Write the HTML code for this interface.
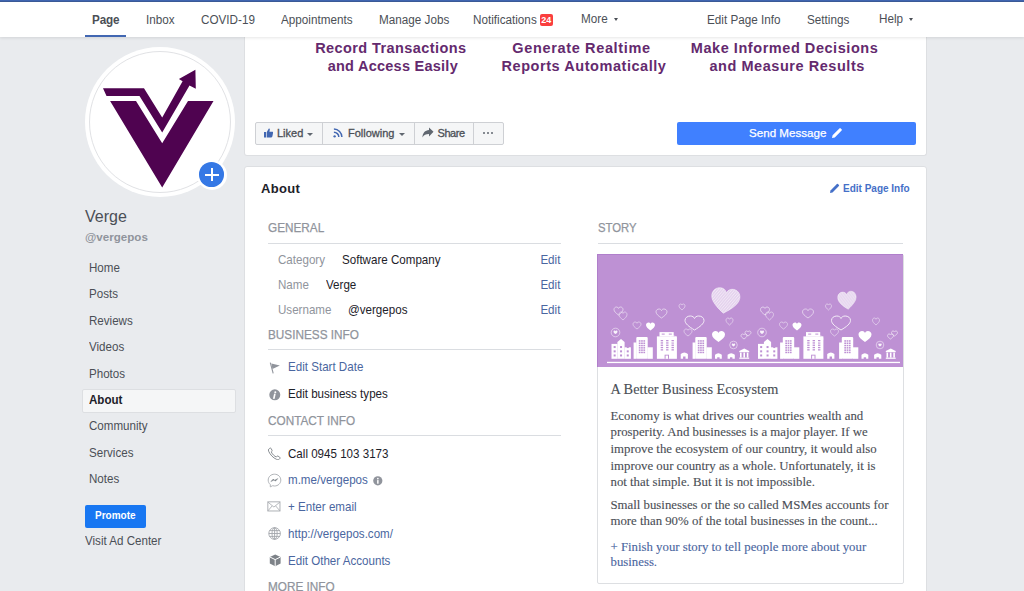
<!DOCTYPE html>
<html><head><meta charset="utf-8">
<style>
*{margin:0;padding:0;box-sizing:border-box}
html,body{width:1024px;height:591px;overflow:hidden;background:#e9ebee;font-family:"Liberation Sans",sans-serif;color:#1d2129}
.a{position:absolute;white-space:nowrap;line-height:1}
#topline{position:absolute;z-index:7;left:0;top:0;width:1024px;height:2px;background:linear-gradient(#4065b0 0,#4065b0 1px,#3b5a96 1px,#3b5a96 2px)}
#nav{z-index:5;position:absolute;left:0;top:2px;width:1024px;height:35px;background:#fff;box-shadow:0 1px 3px rgba(0,0,0,.10)}
.nv{font-size:12.5px;color:#4b4f56;z-index:6;transform:scaleX(.936);transform-origin:0 0}
.card{position:absolute;background:#fff;border:1px solid #dddfe2;border-radius:3px}
.sb{font-size:12.4px;color:#4b4f56;transform:scaleX(.935);transform-origin:0 0}
.hd{font-size:13px;color:#90949c;transform:scaleX(.905);transform-origin:0 0;-webkit-text-stroke:.25px #90949c}
.sep{position:absolute;height:1px;background:#dadde1}
.lk{color:#4a66a0}
.r{transform-origin:100% 0 !important}
.gy{color:#90949c}
.tx{font-size:12.4px;transform:scaleX(.935);transform-origin:0 0}
.srf{font-family:"Liberation Serif",serif;color:#4b4f56;-webkit-text-stroke:.12px currentColor}
.cv{font-size:14.5px;font-weight:bold;color:#642a6e;letter-spacing:.55px;transform:translateX(-50%)}
.bt{font-size:11px;color:#4b4f56;-webkit-text-stroke:.3px #4b4f56}
.caret{width:0;height:0;border-left:3.3px solid transparent;border-right:3.3px solid transparent;border-top:3.3px solid #606770}
</style></head><body>
<div id="topline"></div>
<div id="nav"></div>
<!-- nav items -->
<div class="a nv" style="left:91.5px;top:14.1px;font-weight:bold;color:#4b4f56;letter-spacing:-.15px">Page</div>
<div style="position:absolute;z-index:6;left:85px;top:35px;width:41px;height:2px;background:#4267b2"></div>
<div class="a nv" style="left:145.5px;top:14.1px">Inbox</div>
<div class="a nv" style="left:200.5px;top:14.1px">COVID-19</div>
<div class="a nv" style="left:281px;top:14.1px">Appointments</div>
<div class="a nv" style="left:378.5px;top:14.1px">Manage Jobs</div>
<div class="a nv" style="left:472.5px;top:14.1px">Notifications</div>
<div class="a" style="z-index:6;left:539.5px;top:14px;width:13.5px;height:12px;background:#fa3e3e;border-radius:2px;color:#fff;font-size:9px;font-weight:bold;text-align:center;line-height:12px">24</div>
<div class="a nv" style="left:581px;top:13.1px">More</div>
<div class="a" style="z-index:6;left:614px;top:18px;width:0;height:0;border-left:2.5px solid transparent;border-right:2.5px solid transparent;border-top:3px solid #4b4f56"></div>
<div class="a nv" style="left:707px;top:14.1px">Edit Page Info</div>
<div class="a nv" style="left:807px;top:14.1px">Settings</div>
<div class="a nv" style="left:879px;top:13.1px">Help</div>
<div class="a" style="z-index:6;left:909px;top:18px;width:0;height:0;border-left:2.5px solid transparent;border-right:2.5px solid transparent;border-top:3px solid #4b4f56"></div>

<!-- top card -->
<div class="card" style="left:244px;top:30px;width:683px;height:126px;border-top:none;border-top-left-radius:0;border-top-right-radius:0"></div>

<!-- profile pic -->
<div class="a" style="left:85px;top:47px;width:150px;height:150px;border-radius:50%;background:#fff"></div>
<div class="a" style="left:89px;top:51px;width:142px;height:142px;border-radius:50%;border:1px solid #e1e2e5"></div>


<!-- logo -->
<svg class="a" style="left:85px;top:47px" width="150" height="150" viewBox="85 47 150 150">
<polygon fill="#4f0350" points="103,88.3 144,88.3 162.2,117.5 182.6,81.2 178.9,78.9 195.4,69.7 195.8,88.7 189.5,85.4 162.2,132.6 139.5,95.9 106.5,95.9"/>
<polygon fill="#4f0350" points="110.1,101 136,101 162.2,143.3 188,101 213.5,101 162.2,187.6"/>
</svg>
<div class="a" style="left:197px;top:159.5px;width:30px;height:30px;border-radius:50%;background:#fff"></div>
<div class="a" style="left:199.2px;top:162.2px;width:25px;height:24.6px;border-radius:50%;background:#3578e5"></div>
<div class="a" style="left:204.8px;top:173.5px;width:14.2px;height:2.3px;background:#fff"></div>
<div class="a" style="left:210.5px;top:168px;width:2.4px;height:13px;background:#fff"></div>

<!-- cover text -->
<div class="a cv" style="left:390.81px;top:40.5px;letter-spacing:0.41px">Record Transactions</div>
<div class="a cv" style="left:392.82px;top:58.5px;letter-spacing:0.25px">and Access Easily</div>
<div class="a cv" style="left:581.53px;top:40.5px;letter-spacing:0.65px">Generate Realtime</div>
<div class="a cv" style="left:584.02px;top:58.5px;letter-spacing:0.55px">Reports Automatically</div>
<div class="a cv" style="left:784.57px;top:40.5px;letter-spacing:0.55px">Make Informed Decisions</div>
<div class="a cv" style="left:787.17px;top:58.5px;letter-spacing:0.55px">and Measure Results</div>

<!-- action buttons -->
<div class="a" style="left:255px;top:122px;width:249px;height:23px;background:#f5f6f7;border:1px solid #ced0d4;border-radius:2px"></div>
<div class="a" style="left:322px;top:123px;width:1px;height:21px;background:#ced0d4"></div>
<div class="a" style="left:414px;top:123px;width:1px;height:21px;background:#ced0d4"></div>
<div class="a" style="left:473px;top:123px;width:1px;height:21px;background:#ced0d4"></div>
<div class="a bt" style="left:277px;top:128.2px">Liked</div>
<div class="a bt" style="left:348px;top:128.2px">Following</div>
<div class="a bt" style="left:437.5px;top:128.2px;letter-spacing:-.45px">Share</div>
<div class="a caret" style="left:307px;top:132.5px"></div>
<div class="a caret" style="left:398.5px;top:132.5px"></div>
<svg class="a" style="left:264px;top:128.3px" width="9.2" height="10.2" viewBox="0 0.8 11 11"><path fill="#4267b2" d="M0 5h2.4v6.5H0z M3.2 5.2 5.6 1.2c.3-.6 1.4-.5 1.4.4L6.5 4.6h3.3c.8 0 1.2.6 1.1 1.3l-.9 4.6c-.1.6-.6 1-1.2 1H3.2z"/></svg>
<svg class="a" style="left:333px;top:128px" width="10" height="10" viewBox="0 0 11 11"><g fill="none" stroke="#4267b2" stroke-width="1.6"><path d="M1 1.2a8.8 8.8 0 0 1 8.8 8.8"/><path d="M1 4.6a5.4 5.4 0 0 1 5.4 5.4"/></g><circle cx="1.8" cy="9.2" r="1.3" fill="#4267b2"/></svg>
<svg class="a" style="left:422px;top:127px" width="12" height="11" viewBox="0 0 12 11"><path fill="#606770" d="M11.5 4.8 7 .6v2.5C3 3.4.8 6 .4 10.4 2 8 3.8 7 7 7v2.6z"/></svg>
<div class="a" style="left:483px;top:132px;width:2px;height:2px;background:#606770;border-radius:1px;box-shadow:4px 0 0 #606770,8px 0 0 #606770"></div>

<!-- send message -->
<div class="a" style="left:677px;top:122px;width:239px;height:23px;background:#4080ff;border-radius:2px"></div>
<div class="a" style="left:749px;top:127px;font-size:11.6px;color:#fff;-webkit-text-stroke:.25px #fff">Send Message</div>
<svg class="a" style="left:831px;top:127px" width="12" height="12" viewBox="0 0 12 12"><path fill="#fff" d="M1 11l.6-2.8L8.4 1.4a.9.9 0 0 1 1.3 0l.9.9a.9.9 0 0 1 0 1.3L3.8 10.4z"/></svg>

<!-- about card -->
<div class="card" style="left:244px;top:166px;width:683px;height:440px"></div>
<div class="a" style="left:261px;top:181.8px;font-size:13px;font-weight:bold;color:#1d2129;letter-spacing:.3px">About</div>
<svg class="a" style="left:830px;top:182.5px" width="10" height="10" viewBox="0 0 10 10"><path fill="#4570c8" d="M0 10l.5-2.5L6.9 1.1a.8.8 0 0 1 1.1 0l.9.9a.8.8 0 0 1 0 1.1L2.5 9.5z"/></svg>
<div class="a" style="left:843px;top:184.0px;font-size:10px;font-weight:bold;color:#4570c8">Edit Page Info</div>

<div class="a hd" style="left:268px;top:220.9px">GENERAL</div>
<div class="sep" style="left:268px;top:243px;width:293px"></div>
<div class="a tx gy" style="left:278px;top:253.9px">Category</div>
<div class="a tx" style="left:342px;top:253.9px">Software Company</div>
<div class="a tx lk r" style="right:463.5px;top:253.9px">Edit</div>
<div class="a tx gy" style="left:278px;top:278.9px">Name</div>
<div class="a tx" style="left:325.5px;top:278.9px">Verge</div>
<div class="a tx lk r" style="right:463.5px;top:278.9px">Edit</div>
<div class="a tx gy" style="left:278px;top:303.9px">Username</div>
<div class="a tx" style="left:348px;top:303.9px">@vergepos</div>
<div class="a tx lk r" style="right:463.5px;top:303.9px">Edit</div>

<div class="a hd" style="left:268px;top:328.4px">BUSINESS INFO</div>
<div class="sep" style="left:268px;top:349px;width:293px"></div>
<div class="a tx lk" style="left:288px;top:361.2px">Edit Start Date</div>
<div class="a tx" style="left:288px;top:388.1px">Edit business types</div>

<div class="a hd" style="left:268px;top:413.5px">CONTACT INFO</div>
<div class="sep" style="left:268px;top:435px;width:293px"></div>
<div class="a tx" style="left:288px;top:447.8px">Call 0945 103 3173</div>
<div class="a tx lk" style="left:288px;top:474.3px">m.me/vergepos</div>
<div class="a tx lk" style="left:288px;top:501.1px">+ Enter email</div>
<div class="a tx lk" style="left:288px;top:527.8px">http://vergepos.com/</div>
<div class="a tx lk" style="left:288px;top:554.5px">Edit Other Accounts</div>
<div class="a hd" style="left:268px;top:579.9px">MORE INFO</div>

<!-- sidebar -->
<div class="a" style="left:85px;top:209.2px;font-size:16px;color:#4b4f56">Verge</div>
<div class="a" style="left:85px;top:230.7px;font-size:11.6px;font-weight:bold;color:#90949c">@vergepos</div>
<div class="a" style="left:81.5px;top:388.5px;width:154px;height:24.5px;background:#f5f6f7;border:1px solid #dddfe2;border-radius:2px"></div>
<div class="a sb" style="left:88.5px;top:262.4px">Home</div>
<div class="a sb" style="left:88.5px;top:288.4px">Posts</div>
<div class="a sb" style="left:88.5px;top:314.8px">Reviews</div>
<div class="a sb" style="left:88.5px;top:341.1px">Videos</div>
<div class="a sb" style="left:88.5px;top:367.5px">Photos</div>
<div class="a sb" style="left:88.5px;top:393.8px;font-weight:bold;color:#1d2129">About</div>
<div class="a sb" style="left:88.5px;top:420.2px">Community</div>
<div class="a sb" style="left:88.5px;top:446.6px">Services</div>
<div class="a sb" style="left:88.5px;top:472.9px">Notes</div>
<div class="a" style="left:85px;top:504.5px;width:60.5px;height:23px;background:#1877f2;border-radius:2px"></div>
<div class="a" style="left:95px;top:510.8px;font-size:10px;font-weight:bold;color:#fff">Promote</div>
<div class="a" style="left:85px;top:534.9px;font-size:12.4px;color:#4b4f56;transform:scaleX(.935);transform-origin:0 0">Visit Ad Center</div>

<!-- story -->
<div class="a hd" style="transform:scaleX(.87);left:598px;top:220.9px">STORY</div>
<div class="sep" style="left:598px;top:243px;width:305px"></div>
<div class="a" style="left:597px;top:254px;width:307px;height:330px;border:1px solid #dddfe2;border-radius:2px"></div>
<svg class="a" style="left:597px;top:254px" width="306" height="113" viewBox="0 0 306 113">
<defs><clipPath id="hc"><path d="M50 95C20 72 0 52 0 30C0 12 13 0 28 0C39 0 47 7 50 17C53 7 61 0 72 0C87 0 100 12 100 30C100 52 80 72 50 95Z"/></clipPath></defs><rect width="306" height="113" fill="#be91d4"/>
<rect x="0" y="0" width="306" height="1" fill="#b07fcb"/>
<rect x="0" y="0" width="1" height="113" fill="#b07fcb"/>
<rect x="10" y="107.8" width="293" height="1.3" fill="#fff"/>
<g id="half"><g fill="#fff"><rect x="14.5" y="89.9" width="6" height="14.9"/><polygon points="20.4,104.8 20.4,88 24,85.1 27.6,88 27.6,104.8"/><rect x="27.5" y="93.3" width="6.4" height="11.5"/><rect x="16.65" y="92.05" width="2" height="2" fill="#be91d4"/><rect x="16.65" y="96.35" width="2" height="2" fill="#be91d4"/><rect x="16.65" y="100.45" width="2" height="2" fill="#be91d4"/><rect x="23.05" y="92.05" width="2" height="2" fill="#be91d4"/><rect x="23.05" y="96.35" width="2" height="2" fill="#be91d4"/><rect x="23.05" y="100.45" width="2" height="2" fill="#be91d4"/><rect x="29.75" y="92.05" width="2" height="2" fill="#be91d4"/><rect x="29.75" y="96.35" width="2" height="2" fill="#be91d4"/><rect x="29.75" y="100.45" width="2" height="2" fill="#be91d4"/><rect x="39.3" y="83.1" width="11.4" height="21.7" rx="1"/><rect x="36.6" y="88.5" width="3" height="16.3"/><rect x="50.4" y="93.3" width="5.4" height="11.5"/><rect x="41.8" y="86.2" width="1.7" height="1.5" fill="#be91d4"/><rect x="41.8" y="88.5" width="1.7" height="1.5" fill="#be91d4"/><rect x="41.8" y="90.8" width="1.7" height="1.5" fill="#be91d4"/><rect x="41.8" y="93.10000000000001" width="1.7" height="1.5" fill="#be91d4"/><rect x="41.8" y="95.4" width="1.7" height="1.5" fill="#be91d4"/><rect x="41.8" y="97.7" width="1.7" height="1.5" fill="#be91d4"/><rect x="44.099999999999994" y="86.2" width="1.7" height="1.5" fill="#be91d4"/><rect x="44.099999999999994" y="88.5" width="1.7" height="1.5" fill="#be91d4"/><rect x="44.099999999999994" y="90.8" width="1.7" height="1.5" fill="#be91d4"/><rect x="44.099999999999994" y="93.10000000000001" width="1.7" height="1.5" fill="#be91d4"/><rect x="44.099999999999994" y="95.4" width="1.7" height="1.5" fill="#be91d4"/><rect x="44.099999999999994" y="97.7" width="1.7" height="1.5" fill="#be91d4"/><rect x="46.4" y="86.2" width="1.7" height="1.5" fill="#be91d4"/><rect x="46.4" y="88.5" width="1.7" height="1.5" fill="#be91d4"/><rect x="46.4" y="90.8" width="1.7" height="1.5" fill="#be91d4"/><rect x="46.4" y="93.10000000000001" width="1.7" height="1.5" fill="#be91d4"/><rect x="46.4" y="95.4" width="1.7" height="1.5" fill="#be91d4"/><rect x="46.4" y="97.7" width="1.7" height="1.5" fill="#be91d4"/><rect x="62.5" y="78.1" width="14.2" height="4.5"/><rect x="59.9" y="82.4" width="20" height="22.4"/><rect x="64.7" y="79.6" width="3" height="1" fill="#be91d4"/><rect x="71.8" y="79.6" width="3" height="1" fill="#be91d4"/><rect x="63.699999999999996" y="86.0" width="2.4" height="1.3" fill="#be91d4"/><rect x="63.699999999999996" y="88.3" width="2.4" height="1.3" fill="#be91d4"/><rect x="63.699999999999996" y="90.6" width="2.4" height="1.3" fill="#be91d4"/><rect x="63.699999999999996" y="92.9" width="2.4" height="1.3" fill="#be91d4"/><rect x="63.699999999999996" y="95.2" width="2.4" height="1.3" fill="#be91d4"/><rect x="69.1" y="86.0" width="2.4" height="1.3" fill="#be91d4"/><rect x="69.1" y="88.3" width="2.4" height="1.3" fill="#be91d4"/><rect x="69.1" y="90.6" width="2.4" height="1.3" fill="#be91d4"/><rect x="69.1" y="92.9" width="2.4" height="1.3" fill="#be91d4"/><rect x="69.1" y="95.2" width="2.4" height="1.3" fill="#be91d4"/><rect x="74.5" y="86.0" width="2.4" height="1.3" fill="#be91d4"/><rect x="74.5" y="88.3" width="2.4" height="1.3" fill="#be91d4"/><rect x="74.5" y="90.6" width="2.4" height="1.3" fill="#be91d4"/><rect x="74.5" y="92.9" width="2.4" height="1.3" fill="#be91d4"/><rect x="74.5" y="95.2" width="2.4" height="1.3" fill="#be91d4"/><rect x="67.6" y="100.7" width="4.4" height="4.1" fill="#be91d4"/><rect x="68.6" y="101.6" width="2.4" height="3.2"/><path d="M83.7 104.8V100.0Q87.3 97.0 90.9 100.0V104.8Z"/><rect x="86.1" y="102.5" width="2.4" height="3.5" fill="#be91d4"/><rect x="98.3" y="83.1" width="11.4" height="21.7" rx="1"/><rect x="95.6" y="88.5" width="3" height="16.3"/><rect x="109.4" y="93.3" width="5.4" height="11.5"/><rect x="100.8" y="86.2" width="1.7" height="1.5" fill="#be91d4"/><rect x="100.8" y="88.5" width="1.7" height="1.5" fill="#be91d4"/><rect x="100.8" y="90.8" width="1.7" height="1.5" fill="#be91d4"/><rect x="100.8" y="93.10000000000001" width="1.7" height="1.5" fill="#be91d4"/><rect x="100.8" y="95.4" width="1.7" height="1.5" fill="#be91d4"/><rect x="100.8" y="97.7" width="1.7" height="1.5" fill="#be91d4"/><rect x="103.1" y="86.2" width="1.7" height="1.5" fill="#be91d4"/><rect x="103.1" y="88.5" width="1.7" height="1.5" fill="#be91d4"/><rect x="103.1" y="90.8" width="1.7" height="1.5" fill="#be91d4"/><rect x="103.1" y="93.10000000000001" width="1.7" height="1.5" fill="#be91d4"/><rect x="103.1" y="95.4" width="1.7" height="1.5" fill="#be91d4"/><rect x="103.1" y="97.7" width="1.7" height="1.5" fill="#be91d4"/><rect x="105.39999999999999" y="86.2" width="1.7" height="1.5" fill="#be91d4"/><rect x="105.39999999999999" y="88.5" width="1.7" height="1.5" fill="#be91d4"/><rect x="105.39999999999999" y="90.8" width="1.7" height="1.5" fill="#be91d4"/><rect x="105.39999999999999" y="93.10000000000001" width="1.7" height="1.5" fill="#be91d4"/><rect x="105.39999999999999" y="95.4" width="1.7" height="1.5" fill="#be91d4"/><rect x="105.39999999999999" y="97.7" width="1.7" height="1.5" fill="#be91d4"/><path d="M118 104.8V100.8Q121.4 97.8 124.8 100.8V104.8Z"/><rect x="120.2" y="103.3" width="2.4" height="3.5" fill="#be91d4"/><path d="M130.6 104.8V100.8Q134.2 97.8 137.79999999999998 100.8V104.8Z"/><rect x="133.0" y="103.3" width="2.4" height="3.5" fill="#be91d4"/><polygon points="142.3,97 147.25,94.5 152.2,97"/><rect x="142.3" y="97" width="9.9" height="1.2"/><rect x="143" y="98.6" width="1.6" height="5"/><rect x="146.4" y="98.6" width="1.6" height="5"/><rect x="149.8" y="98.6" width="1.6" height="5"/><rect x="142.3" y="103.6" width="9.9" height="1.2"/></g><g transform="translate(114 34.4) scale(0.283 0.263)"><g transform="rotate(8 50 47)"><path d="M50 95C20 72 0 52 0 30C0 12 13 0 28 0C39 0 47 7 50 17C53 7 61 0 72 0C87 0 100 12 100 30C100 52 80 72 50 95Z" fill="#fff" opacity=".6"/><g clip-path="url(#hc)"><path d="M-60 100L0 -5" stroke="#fff" stroke-width="3" opacity=".55"/><path d="M-51 100L9 -5" stroke="#fff" stroke-width="3" opacity=".55"/><path d="M-42 100L18 -5" stroke="#fff" stroke-width="3" opacity=".55"/><path d="M-33 100L27 -5" stroke="#fff" stroke-width="3" opacity=".55"/><path d="M-24 100L36 -5" stroke="#fff" stroke-width="3" opacity=".55"/><path d="M-15 100L45 -5" stroke="#fff" stroke-width="3" opacity=".55"/><path d="M-6 100L54 -5" stroke="#fff" stroke-width="3" opacity=".55"/><path d="M3 100L63 -5" stroke="#fff" stroke-width="3" opacity=".55"/><path d="M12 100L72 -5" stroke="#fff" stroke-width="3" opacity=".55"/><path d="M21 100L81 -5" stroke="#fff" stroke-width="3" opacity=".55"/><path d="M30 100L90 -5" stroke="#fff" stroke-width="3" opacity=".55"/><path d="M39 100L99 -5" stroke="#fff" stroke-width="3" opacity=".55"/><path d="M48 100L108 -5" stroke="#fff" stroke-width="3" opacity=".55"/><path d="M57 100L117 -5" stroke="#fff" stroke-width="3" opacity=".55"/><path d="M66 100L126 -5" stroke="#fff" stroke-width="3" opacity=".55"/><path d="M75 100L135 -5" stroke="#fff" stroke-width="3" opacity=".55"/><path d="M84 100L144 -5" stroke="#fff" stroke-width="3" opacity=".55"/><path d="M93 100L153 -5" stroke="#fff" stroke-width="3" opacity=".55"/><path d="M102 100L162 -5" stroke="#fff" stroke-width="3" opacity=".55"/></g><path d="M50 95C20 72 0 52 0 30C0 12 13 0 28 0C39 0 47 7 50 17C53 7 61 0 72 0C87 0 100 12 100 30C100 52 80 72 50 95Z" fill="none" stroke="#fff" stroke-width="2.5" opacity=".6"/></g></g><path transform="translate(115 77) scale(0.13 0.11578947368421053)" d="M50 95C20 72 0 52 0 30C0 12 13 0 28 0C39 0 47 7 50 17C53 7 61 0 72 0C87 0 100 12 100 30C100 52 80 72 50 95Z" fill="#fff" opacity="1"/><path transform="translate(49 68.5) scale(0.09 0.08421052631578947)" d="M50 95C20 72 0 52 0 30C0 12 13 0 28 0C39 0 47 7 50 17C53 7 61 0 72 0C87 0 100 12 100 30C100 52 80 72 50 95Z" fill="#fff" opacity="1"/><path transform="translate(59 55) scale(0.11 0.09473684210526316)" d="M50 95C20 72 0 52 0 30C0 12 13 0 28 0C39 0 47 7 50 17C53 7 61 0 72 0C87 0 100 12 100 30C100 52 80 72 50 95Z" fill="none" stroke="#fff" stroke-width="0.8" vector-effect="non-scaling-stroke" opacity="0.7"/><path transform="translate(88 62) scale(0.19 0.14736842105263157)" d="M50 95C20 72 0 52 0 30C0 12 13 0 28 0C39 0 47 7 50 17C53 7 61 0 72 0C87 0 100 12 100 30C100 52 80 72 50 95Z" fill="none" stroke="#fff" stroke-width="1" vector-effect="non-scaling-stroke" opacity="0.85"/><path transform="translate(17 53) scale(0.09 0.08421052631578947)" d="M50 95C20 72 0 52 0 30C0 12 13 0 28 0C39 0 47 7 50 17C53 7 61 0 72 0C87 0 100 12 100 30C100 52 80 72 50 95Z" fill="none" stroke="#fff" stroke-width="0.8" vector-effect="non-scaling-stroke" opacity="0.7"/><path transform="translate(22 58) scale(0.08 0.08421052631578947)" d="M50 95C20 72 0 52 0 30C0 12 13 0 28 0C39 0 47 7 50 17C53 7 61 0 72 0C87 0 100 12 100 30C100 52 80 72 50 95Z" fill="none" stroke="#fff" stroke-width="0.8" vector-effect="non-scaling-stroke" opacity="0.6"/><path transform="translate(36 68) scale(0.08 0.07368421052631578)" d="M50 95C20 72 0 52 0 30C0 12 13 0 28 0C39 0 47 7 50 17C53 7 61 0 72 0C87 0 100 12 100 30C100 52 80 72 50 95Z" fill="none" stroke="#fff" stroke-width="0.8" vector-effect="non-scaling-stroke" opacity="0.6"/><circle cx="18.5" cy="78.5" r="4.3" fill="none" stroke="#fff" stroke-width=".7" opacity=".7"/><path transform="translate(16.5 76.5) scale(0.04 0.037894736842105266)" d="M50 95C20 72 0 52 0 30C0 12 13 0 28 0C39 0 47 7 50 17C53 7 61 0 72 0C87 0 100 12 100 30C100 52 80 72 50 95Z" fill="#fff" opacity="0.9"/><path transform="translate(82 50) scale(0.06 0.06315789473684211)" d="M50 95C20 72 0 52 0 30C0 12 13 0 28 0C39 0 47 7 50 17C53 7 61 0 72 0C87 0 100 12 100 30C100 52 80 72 50 95Z" fill="none" stroke="#fff" stroke-width="0.8" vector-effect="non-scaling-stroke" opacity="0.6"/><path transform="translate(129 64) scale(0.07 0.07368421052631578)" d="M50 95C20 72 0 52 0 30C0 12 13 0 28 0C39 0 47 7 50 17C53 7 61 0 72 0C87 0 100 12 100 30C100 52 80 72 50 95Z" fill="none" stroke="#fff" stroke-width="0.8" vector-effect="non-scaling-stroke" opacity="0.6"/><circle cx="136.5" cy="91" r="3.8" fill="none" stroke="#fff" stroke-width=".7" opacity=".7"/><path transform="translate(134.8 89.5) scale(0.034 0.031578947368421054)" d="M50 95C20 72 0 52 0 30C0 12 13 0 28 0C39 0 47 7 50 17C53 7 61 0 72 0C87 0 100 12 100 30C100 52 80 72 50 95Z" fill="#fff" opacity="0.9"/><path transform="translate(144 80) scale(0.06 0.05263157894736842)" d="M50 95C20 72 0 52 0 30C0 12 13 0 28 0C39 0 47 7 50 17C53 7 61 0 72 0C87 0 100 12 100 30C100 52 80 72 50 95Z" fill="none" stroke="#fff" stroke-width="0.8" vector-effect="non-scaling-stroke" opacity="0.7"/><path transform="translate(148 77) scale(0.06 0.05263157894736842)" d="M50 95C20 72 0 52 0 30C0 12 13 0 28 0C39 0 47 7 50 17C53 7 61 0 72 0C87 0 100 12 100 30C100 52 80 72 50 95Z" fill="none" stroke="#fff" stroke-width="0.8" vector-effect="non-scaling-stroke" opacity="0.7"/><circle cx="76" cy="85" r="3.5" fill="none" stroke="#fff" stroke-width=".7" opacity=".6"/><path transform="translate(87 75) scale(0.08 0.07368421052631578)" d="M50 95C20 72 0 52 0 30C0 12 13 0 28 0C39 0 47 7 50 17C53 7 61 0 72 0C87 0 100 12 100 30C100 52 80 72 50 95Z" fill="none" stroke="#fff" stroke-width="0.8" vector-effect="non-scaling-stroke" opacity="0.6"/></g>
<g transform="translate(146.5 0)">
<g fill="#fff"><rect x="14.5" y="89.9" width="6" height="14.9"/><polygon points="20.4,104.8 20.4,88 24,85.1 27.6,88 27.6,104.8"/><rect x="27.5" y="93.3" width="6.4" height="11.5"/><rect x="16.65" y="92.05" width="2" height="2" fill="#be91d4"/><rect x="16.65" y="96.35" width="2" height="2" fill="#be91d4"/><rect x="16.65" y="100.45" width="2" height="2" fill="#be91d4"/><rect x="23.05" y="92.05" width="2" height="2" fill="#be91d4"/><rect x="23.05" y="96.35" width="2" height="2" fill="#be91d4"/><rect x="23.05" y="100.45" width="2" height="2" fill="#be91d4"/><rect x="29.75" y="92.05" width="2" height="2" fill="#be91d4"/><rect x="29.75" y="96.35" width="2" height="2" fill="#be91d4"/><rect x="29.75" y="100.45" width="2" height="2" fill="#be91d4"/><rect x="39.3" y="83.1" width="11.4" height="21.7" rx="1"/><rect x="36.6" y="88.5" width="3" height="16.3"/><rect x="50.4" y="93.3" width="5.4" height="11.5"/><rect x="41.8" y="86.2" width="1.7" height="1.5" fill="#be91d4"/><rect x="41.8" y="88.5" width="1.7" height="1.5" fill="#be91d4"/><rect x="41.8" y="90.8" width="1.7" height="1.5" fill="#be91d4"/><rect x="41.8" y="93.10000000000001" width="1.7" height="1.5" fill="#be91d4"/><rect x="41.8" y="95.4" width="1.7" height="1.5" fill="#be91d4"/><rect x="41.8" y="97.7" width="1.7" height="1.5" fill="#be91d4"/><rect x="44.099999999999994" y="86.2" width="1.7" height="1.5" fill="#be91d4"/><rect x="44.099999999999994" y="88.5" width="1.7" height="1.5" fill="#be91d4"/><rect x="44.099999999999994" y="90.8" width="1.7" height="1.5" fill="#be91d4"/><rect x="44.099999999999994" y="93.10000000000001" width="1.7" height="1.5" fill="#be91d4"/><rect x="44.099999999999994" y="95.4" width="1.7" height="1.5" fill="#be91d4"/><rect x="44.099999999999994" y="97.7" width="1.7" height="1.5" fill="#be91d4"/><rect x="46.4" y="86.2" width="1.7" height="1.5" fill="#be91d4"/><rect x="46.4" y="88.5" width="1.7" height="1.5" fill="#be91d4"/><rect x="46.4" y="90.8" width="1.7" height="1.5" fill="#be91d4"/><rect x="46.4" y="93.10000000000001" width="1.7" height="1.5" fill="#be91d4"/><rect x="46.4" y="95.4" width="1.7" height="1.5" fill="#be91d4"/><rect x="46.4" y="97.7" width="1.7" height="1.5" fill="#be91d4"/><rect x="62.5" y="78.1" width="14.2" height="4.5"/><rect x="59.9" y="82.4" width="20" height="22.4"/><rect x="64.7" y="79.6" width="3" height="1" fill="#be91d4"/><rect x="71.8" y="79.6" width="3" height="1" fill="#be91d4"/><rect x="63.699999999999996" y="86.0" width="2.4" height="1.3" fill="#be91d4"/><rect x="63.699999999999996" y="88.3" width="2.4" height="1.3" fill="#be91d4"/><rect x="63.699999999999996" y="90.6" width="2.4" height="1.3" fill="#be91d4"/><rect x="63.699999999999996" y="92.9" width="2.4" height="1.3" fill="#be91d4"/><rect x="63.699999999999996" y="95.2" width="2.4" height="1.3" fill="#be91d4"/><rect x="69.1" y="86.0" width="2.4" height="1.3" fill="#be91d4"/><rect x="69.1" y="88.3" width="2.4" height="1.3" fill="#be91d4"/><rect x="69.1" y="90.6" width="2.4" height="1.3" fill="#be91d4"/><rect x="69.1" y="92.9" width="2.4" height="1.3" fill="#be91d4"/><rect x="69.1" y="95.2" width="2.4" height="1.3" fill="#be91d4"/><rect x="74.5" y="86.0" width="2.4" height="1.3" fill="#be91d4"/><rect x="74.5" y="88.3" width="2.4" height="1.3" fill="#be91d4"/><rect x="74.5" y="90.6" width="2.4" height="1.3" fill="#be91d4"/><rect x="74.5" y="92.9" width="2.4" height="1.3" fill="#be91d4"/><rect x="74.5" y="95.2" width="2.4" height="1.3" fill="#be91d4"/><rect x="67.6" y="100.7" width="4.4" height="4.1" fill="#be91d4"/><rect x="68.6" y="101.6" width="2.4" height="3.2"/><path d="M83.7 104.8V100.0Q87.3 97.0 90.9 100.0V104.8Z"/><rect x="86.1" y="102.5" width="2.4" height="3.5" fill="#be91d4"/><rect x="98.3" y="83.1" width="11.4" height="21.7" rx="1"/><rect x="95.6" y="88.5" width="3" height="16.3"/><rect x="109.4" y="93.3" width="5.4" height="11.5"/><rect x="100.8" y="86.2" width="1.7" height="1.5" fill="#be91d4"/><rect x="100.8" y="88.5" width="1.7" height="1.5" fill="#be91d4"/><rect x="100.8" y="90.8" width="1.7" height="1.5" fill="#be91d4"/><rect x="100.8" y="93.10000000000001" width="1.7" height="1.5" fill="#be91d4"/><rect x="100.8" y="95.4" width="1.7" height="1.5" fill="#be91d4"/><rect x="100.8" y="97.7" width="1.7" height="1.5" fill="#be91d4"/><rect x="103.1" y="86.2" width="1.7" height="1.5" fill="#be91d4"/><rect x="103.1" y="88.5" width="1.7" height="1.5" fill="#be91d4"/><rect x="103.1" y="90.8" width="1.7" height="1.5" fill="#be91d4"/><rect x="103.1" y="93.10000000000001" width="1.7" height="1.5" fill="#be91d4"/><rect x="103.1" y="95.4" width="1.7" height="1.5" fill="#be91d4"/><rect x="103.1" y="97.7" width="1.7" height="1.5" fill="#be91d4"/><rect x="105.39999999999999" y="86.2" width="1.7" height="1.5" fill="#be91d4"/><rect x="105.39999999999999" y="88.5" width="1.7" height="1.5" fill="#be91d4"/><rect x="105.39999999999999" y="90.8" width="1.7" height="1.5" fill="#be91d4"/><rect x="105.39999999999999" y="93.10000000000001" width="1.7" height="1.5" fill="#be91d4"/><rect x="105.39999999999999" y="95.4" width="1.7" height="1.5" fill="#be91d4"/><rect x="105.39999999999999" y="97.7" width="1.7" height="1.5" fill="#be91d4"/><path d="M118 104.8V100.8Q121.4 97.8 124.8 100.8V104.8Z"/><rect x="120.2" y="103.3" width="2.4" height="3.5" fill="#be91d4"/><path d="M130.6 104.8V100.8Q134.2 97.8 137.79999999999998 100.8V104.8Z"/><rect x="133.0" y="103.3" width="2.4" height="3.5" fill="#be91d4"/><polygon points="142.3,97 147.25,94.5 152.2,97"/><rect x="142.3" y="97" width="9.9" height="1.2"/><rect x="143" y="98.6" width="1.6" height="5"/><rect x="146.4" y="98.6" width="1.6" height="5"/><rect x="149.8" y="98.6" width="1.6" height="5"/><rect x="142.3" y="103.6" width="9.9" height="1.2"/></g>
<path transform="translate(115 77) scale(0.13 0.11578947368421053)" d="M50 95C20 72 0 52 0 30C0 12 13 0 28 0C39 0 47 7 50 17C53 7 61 0 72 0C87 0 100 12 100 30C100 52 80 72 50 95Z" fill="#fff" opacity="1"/><path transform="translate(49 68.5) scale(0.09 0.08421052631578947)" d="M50 95C20 72 0 52 0 30C0 12 13 0 28 0C39 0 47 7 50 17C53 7 61 0 72 0C87 0 100 12 100 30C100 52 80 72 50 95Z" fill="#fff" opacity="1"/><path transform="translate(59 55) scale(0.11 0.09473684210526316)" d="M50 95C20 72 0 52 0 30C0 12 13 0 28 0C39 0 47 7 50 17C53 7 61 0 72 0C87 0 100 12 100 30C100 52 80 72 50 95Z" fill="none" stroke="#fff" stroke-width="0.8" vector-effect="non-scaling-stroke" opacity="0.7"/><path transform="translate(88 62) scale(0.19 0.14736842105263157)" d="M50 95C20 72 0 52 0 30C0 12 13 0 28 0C39 0 47 7 50 17C53 7 61 0 72 0C87 0 100 12 100 30C100 52 80 72 50 95Z" fill="none" stroke="#fff" stroke-width="1" vector-effect="non-scaling-stroke" opacity="0.85"/><path transform="translate(17 53) scale(0.09 0.08421052631578947)" d="M50 95C20 72 0 52 0 30C0 12 13 0 28 0C39 0 47 7 50 17C53 7 61 0 72 0C87 0 100 12 100 30C100 52 80 72 50 95Z" fill="none" stroke="#fff" stroke-width="0.8" vector-effect="non-scaling-stroke" opacity="0.7"/><path transform="translate(22 58) scale(0.08 0.08421052631578947)" d="M50 95C20 72 0 52 0 30C0 12 13 0 28 0C39 0 47 7 50 17C53 7 61 0 72 0C87 0 100 12 100 30C100 52 80 72 50 95Z" fill="none" stroke="#fff" stroke-width="0.8" vector-effect="non-scaling-stroke" opacity="0.6"/><path transform="translate(36 68) scale(0.08 0.07368421052631578)" d="M50 95C20 72 0 52 0 30C0 12 13 0 28 0C39 0 47 7 50 17C53 7 61 0 72 0C87 0 100 12 100 30C100 52 80 72 50 95Z" fill="none" stroke="#fff" stroke-width="0.8" vector-effect="non-scaling-stroke" opacity="0.6"/><circle cx="18.5" cy="78.5" r="4.3" fill="none" stroke="#fff" stroke-width=".7" opacity=".7"/><path transform="translate(16.5 76.5) scale(0.04 0.037894736842105266)" d="M50 95C20 72 0 52 0 30C0 12 13 0 28 0C39 0 47 7 50 17C53 7 61 0 72 0C87 0 100 12 100 30C100 52 80 72 50 95Z" fill="#fff" opacity="0.9"/><path transform="translate(82 50) scale(0.06 0.06315789473684211)" d="M50 95C20 72 0 52 0 30C0 12 13 0 28 0C39 0 47 7 50 17C53 7 61 0 72 0C87 0 100 12 100 30C100 52 80 72 50 95Z" fill="none" stroke="#fff" stroke-width="0.8" vector-effect="non-scaling-stroke" opacity="0.6"/><path transform="translate(129 64) scale(0.07 0.07368421052631578)" d="M50 95C20 72 0 52 0 30C0 12 13 0 28 0C39 0 47 7 50 17C53 7 61 0 72 0C87 0 100 12 100 30C100 52 80 72 50 95Z" fill="none" stroke="#fff" stroke-width="0.8" vector-effect="non-scaling-stroke" opacity="0.6"/><circle cx="136.5" cy="91" r="3.8" fill="none" stroke="#fff" stroke-width=".7" opacity=".7"/><path transform="translate(134.8 89.5) scale(0.034 0.031578947368421054)" d="M50 95C20 72 0 52 0 30C0 12 13 0 28 0C39 0 47 7 50 17C53 7 61 0 72 0C87 0 100 12 100 30C100 52 80 72 50 95Z" fill="#fff" opacity="0.9"/><path transform="translate(144 80) scale(0.06 0.05263157894736842)" d="M50 95C20 72 0 52 0 30C0 12 13 0 28 0C39 0 47 7 50 17C53 7 61 0 72 0C87 0 100 12 100 30C100 52 80 72 50 95Z" fill="none" stroke="#fff" stroke-width="0.8" vector-effect="non-scaling-stroke" opacity="0.7"/><path transform="translate(148 77) scale(0.06 0.05263157894736842)" d="M50 95C20 72 0 52 0 30C0 12 13 0 28 0C39 0 47 7 50 17C53 7 61 0 72 0C87 0 100 12 100 30C100 52 80 72 50 95Z" fill="none" stroke="#fff" stroke-width="0.8" vector-effect="non-scaling-stroke" opacity="0.7"/><circle cx="76" cy="85" r="3.5" fill="none" stroke="#fff" stroke-width=".7" opacity=".6"/><path transform="translate(87 75) scale(0.08 0.07368421052631578)" d="M50 95C20 72 0 52 0 30C0 12 13 0 28 0C39 0 47 7 50 17C53 7 61 0 72 0C87 0 100 12 100 30C100 52 80 72 50 95Z" fill="none" stroke="#fff" stroke-width="0.8" vector-effect="non-scaling-stroke" opacity="0.6"/>
<g transform="translate(94.5 37.6) scale(0.185 0.187)"><g transform="rotate(-6 50 47)"><path d="M50 95C20 72 0 52 0 30C0 12 13 0 28 0C39 0 47 7 50 17C53 7 61 0 72 0C87 0 100 12 100 30C100 52 80 72 50 95Z" fill="#fff" opacity=".6"/><g clip-path="url(#hc)"><path d="M-60 100L0 -5" stroke="#fff" stroke-width="3" opacity=".55"/><path d="M-51 100L9 -5" stroke="#fff" stroke-width="3" opacity=".55"/><path d="M-42 100L18 -5" stroke="#fff" stroke-width="3" opacity=".55"/><path d="M-33 100L27 -5" stroke="#fff" stroke-width="3" opacity=".55"/><path d="M-24 100L36 -5" stroke="#fff" stroke-width="3" opacity=".55"/><path d="M-15 100L45 -5" stroke="#fff" stroke-width="3" opacity=".55"/><path d="M-6 100L54 -5" stroke="#fff" stroke-width="3" opacity=".55"/><path d="M3 100L63 -5" stroke="#fff" stroke-width="3" opacity=".55"/><path d="M12 100L72 -5" stroke="#fff" stroke-width="3" opacity=".55"/><path d="M21 100L81 -5" stroke="#fff" stroke-width="3" opacity=".55"/><path d="M30 100L90 -5" stroke="#fff" stroke-width="3" opacity=".55"/><path d="M39 100L99 -5" stroke="#fff" stroke-width="3" opacity=".55"/><path d="M48 100L108 -5" stroke="#fff" stroke-width="3" opacity=".55"/><path d="M57 100L117 -5" stroke="#fff" stroke-width="3" opacity=".55"/><path d="M66 100L126 -5" stroke="#fff" stroke-width="3" opacity=".55"/><path d="M75 100L135 -5" stroke="#fff" stroke-width="3" opacity=".55"/><path d="M84 100L144 -5" stroke="#fff" stroke-width="3" opacity=".55"/><path d="M93 100L153 -5" stroke="#fff" stroke-width="3" opacity=".55"/><path d="M102 100L162 -5" stroke="#fff" stroke-width="3" opacity=".55"/></g><path d="M50 95C20 72 0 52 0 30C0 12 13 0 28 0C39 0 47 7 50 17C53 7 61 0 72 0C87 0 100 12 100 30C100 52 80 72 50 95Z" fill="none" stroke="#fff" stroke-width="3" opacity=".6"/></g></g>
</g>
</svg>
<div class="a srf" style="left:610.5px;top:381.5px;font-size:14.3px">A Better Business Ecosystem</div>
<div class="a srf" style="left:610.5px;top:407.8px;font-size:12.8px;line-height:16.6px">Economy is what drives our countries wealth and<br>prosperity. And businesses is a major player. If we<br>improve the ecosystem of our country, it would also<br>improve our country as a whole. Unfortunately, it is<br>not that simple. But it is not impossible.</div>
<div class="a srf" style="left:610.5px;top:496.9px;font-size:12.8px;line-height:16.6px">Small businesses or the so called MSMes accounts for<br>more than 90% of the total businesses in the count...</div>
<div class="a srf" style="left:610.5px;top:540.1px;font-size:12.8px;line-height:14.5px;color:#4a66a0">+ Finish your story to tell people more about your<br>business.</div>

<!-- about icons -->
<svg class="a" style="left:268px;top:361px" width="14" height="14" viewBox="0 0 14 14"><path d="M2.3 1.6 5.2 12.4" stroke="#90949c" stroke-width="1.1" fill="none"/><path d="M3.4 2.4 11.9 4.6 4.4 8z" fill="#90949c"/></svg>
<svg class="a" style="left:268.5px;top:388.5px" width="12" height="12" viewBox="0 0 12 12"><circle cx="5.8" cy="5.8" r="5.5" fill="#90949c"/><circle cx="6.3" cy="3.3" r="1" fill="#fff"/><path d="M5.8 5.2 4.9 9.2" stroke="#fff" stroke-width="1.6" stroke-linecap="round"/></svg>
<svg class="a" style="left:266.8px;top:446.6px" width="14.8" height="13.9" viewBox="0 0 16 15"><path d="M3.6 1.2C2.2 1.6 1 2.6 1.8 4.6 3.2 8 6.6 11.8 10.4 13.4c1.6.6 2.8.2 3.6-1 .4-.6.2-1-.2-1.3l-1.8-1.2c-.5-.3-.9-.2-1.3.2l-.6.7C8.200 10.100 6.000 8.200 4.600 5.300l.6-.6c.4-.4.4-.8.2-1.200L4.400 1.500c-.2-.3-.5-.4-.8-.3z" fill="none" stroke="#7d8288" stroke-width="1"/></svg>
<svg class="a" style="left:267px;top:472.5px" width="15" height="15" viewBox="0 0 15 15"><path d="M7.5 1.2c3.6 0 6.3 2.6 6.3 5.9S11.100 13 7.500 13c-.7 0-1.300-.1-1.900-.3L3.300 13.900V11.600C2 10.500 1.200 8.900 1.200 7.100 1.200 3.800 3.900 1.200 7.500 1.200z" fill="none" stroke="#a8abb0" stroke-width=".9"/><path d="M3.900 8.600 6.300 6l1.300 1.300L10.800 5.600 8.400 8.200 7.100 6.900z" fill="#7d8288" stroke="#7d8288" stroke-width=".5"/></svg>
<svg class="a" style="left:267.3px;top:501.2px" width="14" height="11.2" viewBox="0 0 15 12"><rect x=".9" y=".9" width="13" height="9.8" fill="none" stroke="#a8abb0" stroke-width="1"/><path d="M1 1.200 7.400 6.500 13.800 1.200M1 10.500 5.500 5.300M13.800 10.500 9.300 5.300" fill="none" stroke="#a8abb0" stroke-width=".9"/></svg>
<svg class="a" style="left:268px;top:527px" width="14" height="14" viewBox="0 0 14 14"><g fill="none" stroke="#a3a6ab" stroke-width=".9"><circle cx="6.6" cy="6.5" r="5.8"/><ellipse cx="6.6" cy="6.5" rx="2.6" ry="5.8"/><path d="M.8 6.5h11.600M1.500 3.600h10.200M1.500 9.400h10.200M6.600.7v11.600"/></g></svg>
<svg class="a" style="left:268.5px;top:553.5px" width="13" height="13" viewBox="0 0 13 13"><path d="M6.2.6 11.600 2.900V9.600L6.200 12.300 .8 9.600V2.900z" fill="#7d8288"/><path d="M.9 3 6.200 5.600 11.500 3M6.200 5.600V12.200" stroke="#fff" stroke-width="1" fill="none"/></svg>
<svg class="a" style="left:372.5px;top:475.5px" width="10" height="10" viewBox="0 0 10 10"><circle cx="4.800" cy="4.800" r="4.600" fill="#90949c"/><rect x="4.100" y="4.100" width="1.500" height="3.600" fill="#fff"/><circle cx="4.850" cy="2.600" r=".85" fill="#fff"/></svg>
</body></html>
